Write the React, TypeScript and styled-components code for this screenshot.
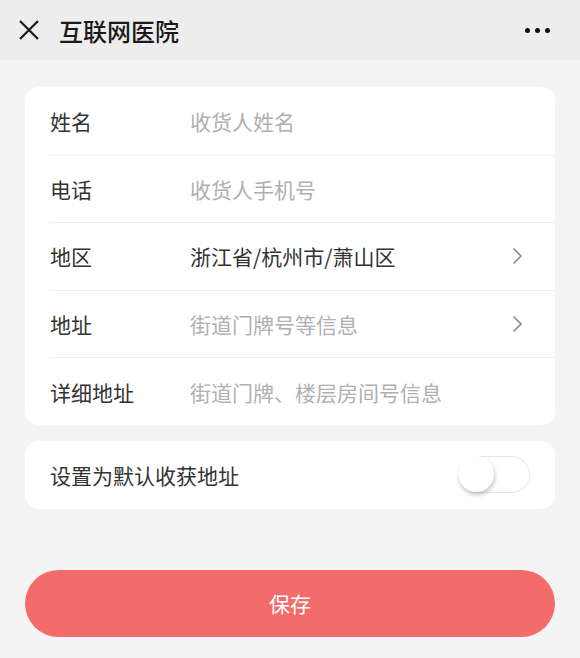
import styled, { createGlobalStyle } from "styled-components";

const GlobalStyle = createGlobalStyle`
  html, body {
    margin: 0;
    padding: 0;
    background: #f4f4f4;
  }
  body {
    font-family: "Noto Sans CJK SC", "Noto Sans", sans-serif;
    color: #333;
  }
`;

const Page = styled.div`
  width: 580px;
  min-height: 658px;
  background: #f4f4f4;
`;

const NavBar = styled.header`
  height: 60px;
  background: #ededed;
  display: flex;
  align-items: center;
  padding: 0 18px;
  box-sizing: border-box;
`;

const NavTitle = styled.h1`
  margin: 0 0 0 19px;
  font-size: 24px;
  font-weight: 500;
  color: #1a1a1a;
  flex: 1;
`;

const Dots = styled.div`
  display: flex;
  gap: 5px;
  margin-right: 12px;

  span {
    width: 5px;
    height: 5px;
    border-radius: 50%;
    background: #111;
  }
`;

const Body = styled.main`
  padding: 27px 25px 0;
  display: flex;
  flex-direction: column;
`;

const Card = styled.section`
  background: #fff;
  border-radius: 14px;
  padding-left: 24px;
  & + & {
    margin-top: 16px;
  }
`;

const Row = styled.div`
  box-sizing: border-box;
  height: 67.6px;
  display: flex;
  align-items: center;
  padding-right: 32px;
  & + & {
    border-top: 1px solid #f0f0f0;
  }
`;

const Label = styled.span`
  width: 140px;
  flex-shrink: 0;
  padding-left: 1px;
  font-size: 21px;
  color: #333;
`;

const Value = styled.span<{ $placeholder?: boolean }>`
  flex: 1;
  font-size: 21px;
  color: ${(p) => (p.$placeholder ? "#b0b0b0" : "#333")};
`;

const SwitchLabel = styled(Label)`
  width: auto;
  flex: 1;
`;

const Switch = styled.div<{ $on?: boolean }>`
  position: relative;
  width: 72px;
  height: 37px;
  box-sizing: border-box;
  border: 1px solid #e6e6e6;
  border-radius: 19px;
  background: ${(p) => (p.$on ? "#f36b6b" : "#fff")};
  margin-right: -7px;
`;

const Knob = styled.div`
  position: absolute;
  top: -1px;
  left: -1px;
  width: 36px;
  height: 36px;
  border-radius: 50%;
  background: #fff;
  box-shadow: 1px 3px 4px rgba(0, 0, 0, 0.22);
`;

const SaveButton = styled.button`
  margin-top: 61px;
  height: 67px;
  border: none;
  border-radius: 34px;
  background: #f36b6b;
  color: #fff;
  font-family: inherit;
  font-size: 21px;
`;

const Close = () => (
  <svg width="22" height="22" viewBox="0 0 22 22">
    <path d="M2 2 L20 20 M20 2 L2 20" stroke="#1a1a1a" strokeWidth="2.2" />
  </svg>
);

const Chevron = () => (
  <svg width="11" height="18" viewBox="0 0 11 18">
    <path d="M1.5 1.5 L9 9 L1.5 16.5" fill="none" stroke="#888" strokeWidth="1.6" />
  </svg>
);

const fields = [
  { label: "姓名", value: "收货人姓名", placeholder: true },
  { label: "电话", value: "收货人手机号", placeholder: true },
  { label: "地区", value: "浙江省/杭州市/萧山区", placeholder: false, arrow: true },
  { label: "地址", value: "街道门牌号等信息", placeholder: true, arrow: true },
  { label: "详细地址", value: "街道门牌、楼层房间号信息", placeholder: true },
];

export default function App() {
  return (
    <Page>
      <GlobalStyle />
      <NavBar>
        <Close />
        <NavTitle>互联网医院</NavTitle>
        <Dots>
          <span />
          <span />
          <span />
        </Dots>
      </NavBar>
      <Body>
        <Card>
          {fields.map((f) => (
            <Row key={f.label}>
              <Label>{f.label}</Label>
              <Value $placeholder={f.placeholder}>{f.value}</Value>
              {f.arrow && <Chevron />}
            </Row>
          ))}
        </Card>
        <Card>
          <Row>
            <SwitchLabel>设置为默认收获地址</SwitchLabel>
            <Switch>
              <Knob />
            </Switch>
          </Row>
        </Card>
        <SaveButton>保存</SaveButton>
      </Body>
    </Page>
  );
}
